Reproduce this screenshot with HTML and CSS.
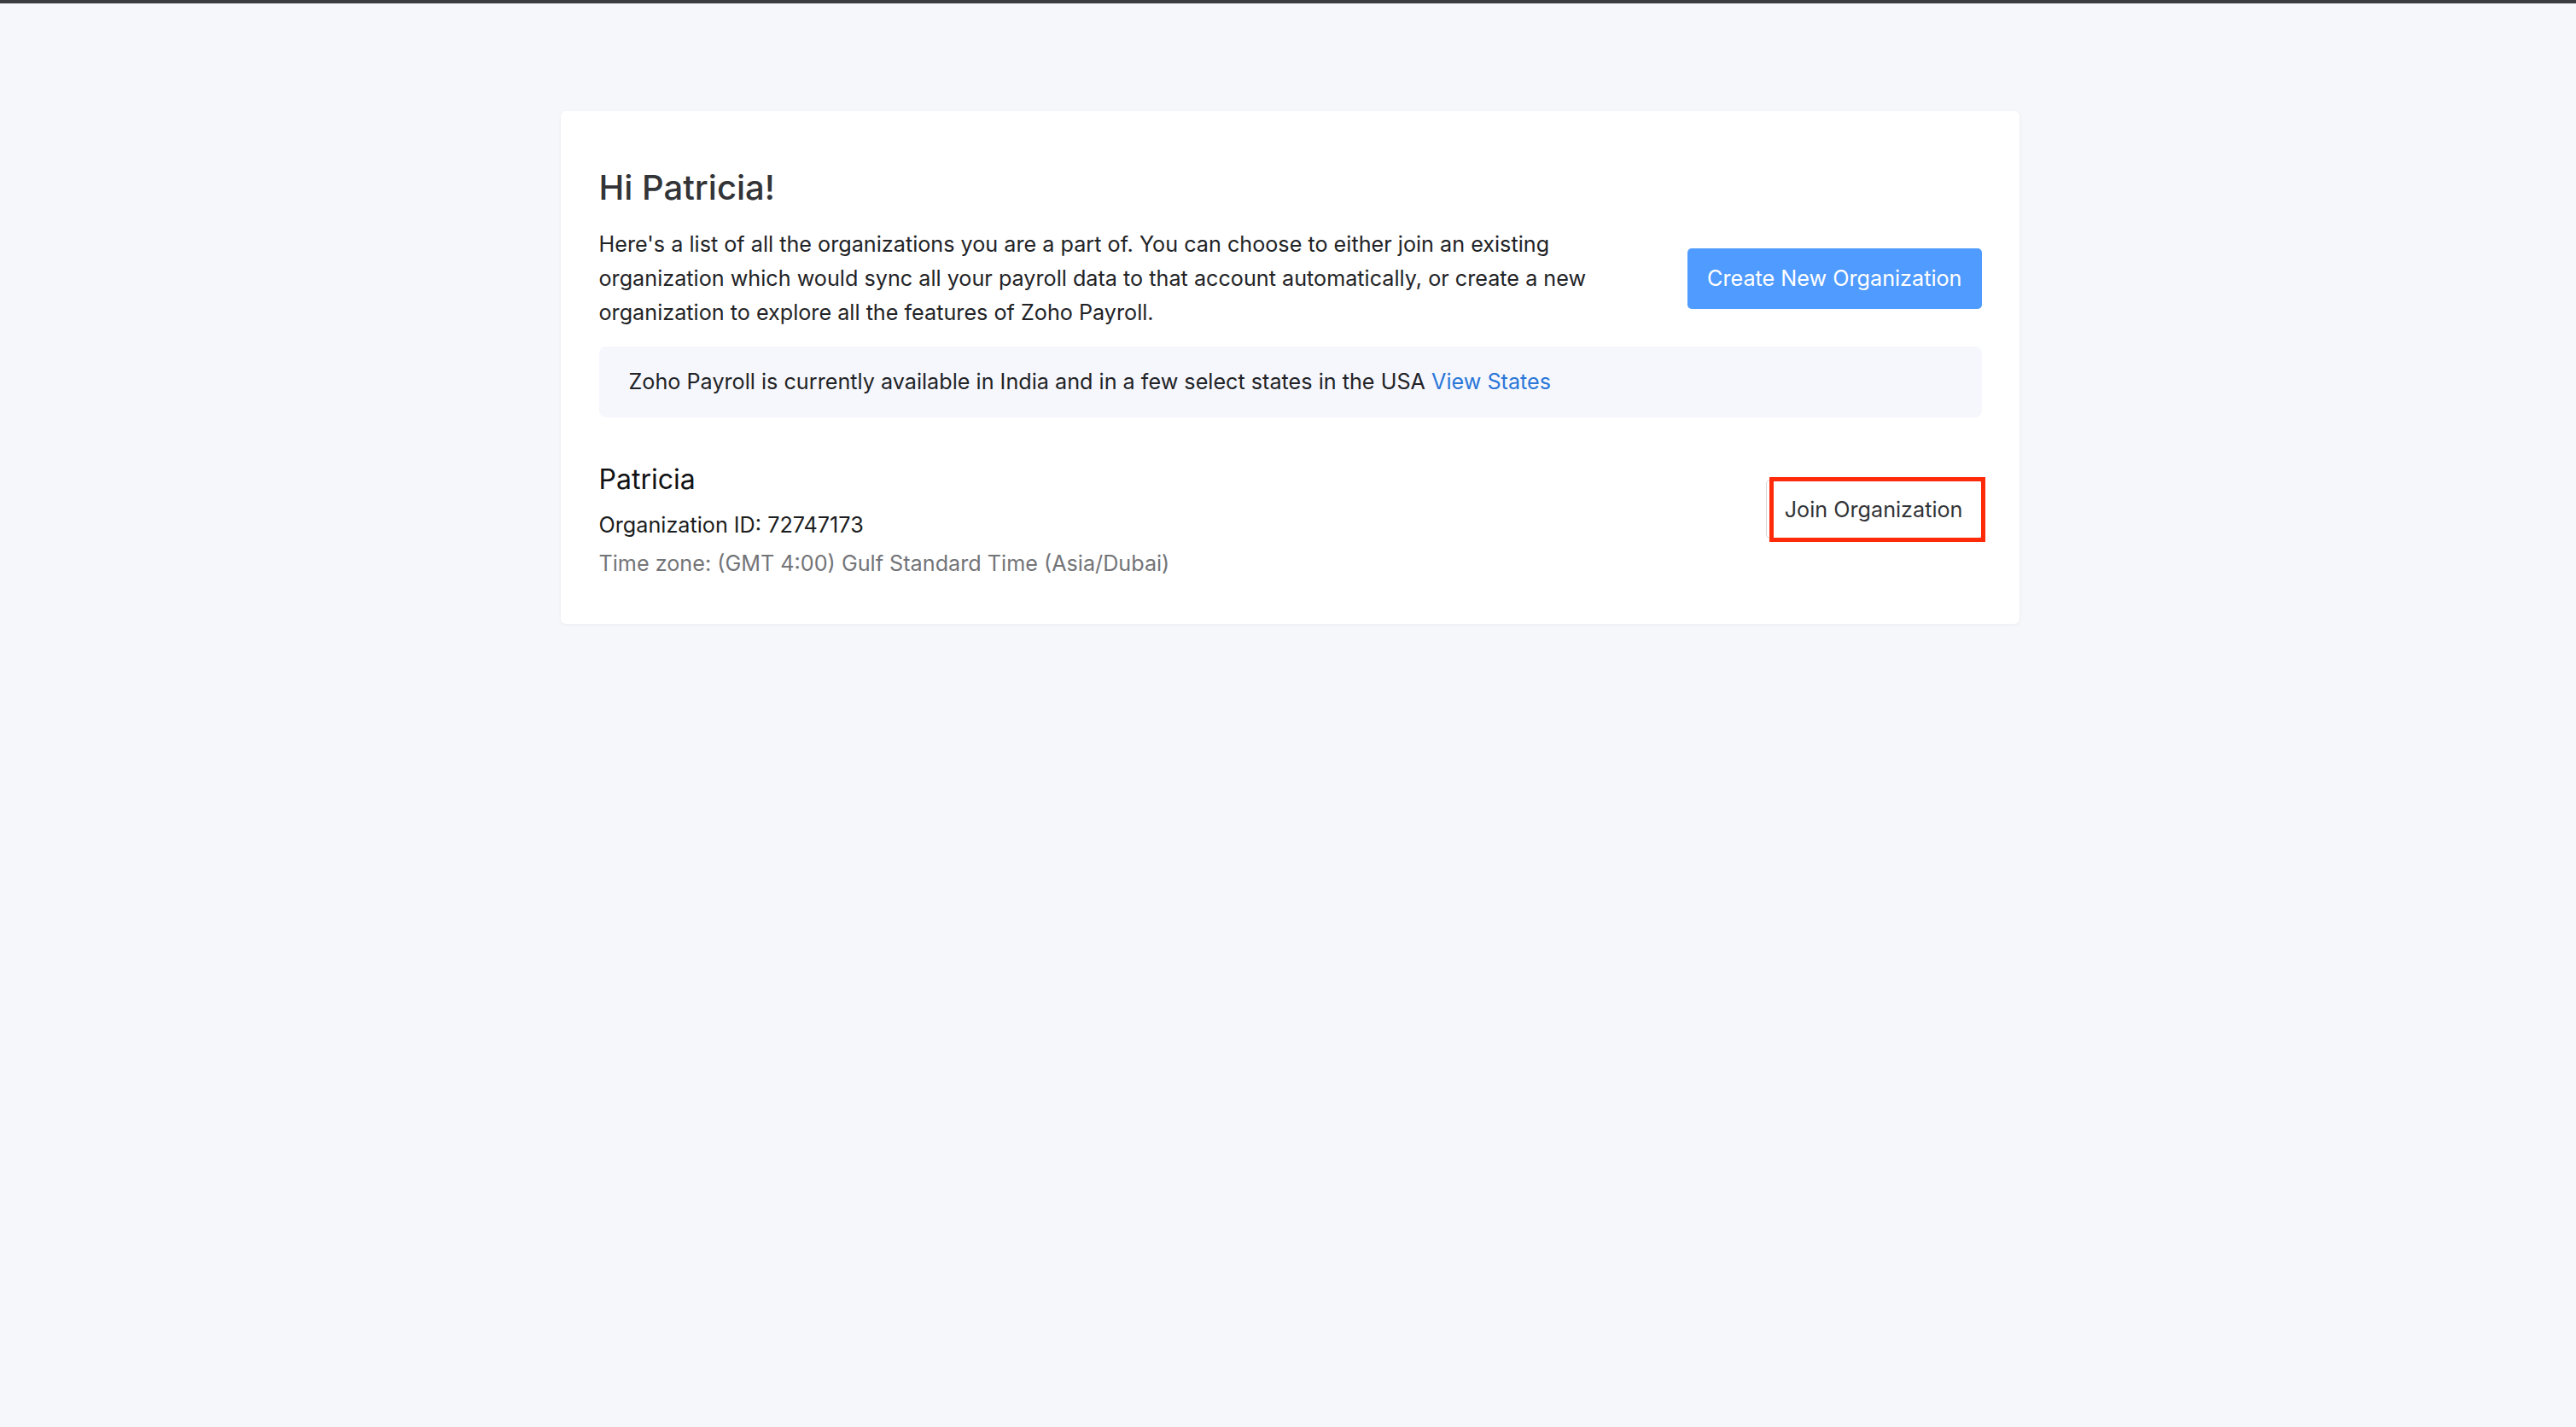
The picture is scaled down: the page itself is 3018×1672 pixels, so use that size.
FILE: index.html
```html
<!DOCTYPE html>
<html lang="en">
<head>
<meta charset="utf-8">
<title>Zoho Payroll - Organizations</title>
<link rel="stylesheet" href="styles.css">
</head>
<body>
<div class="topbar"></div>
<main class="page">
  <section class="card">
    <h1 class="greeting">Hi Patricia!</h1>
    <div class="intro">
      <p class="intro-text">Here's a list of all the organizations you are a part of. You can choose to either join an existing organization which would sync all your payroll data to that account automatically, or create a new organization to explore all the features of Zoho Payroll.</p>
      <button class="btn btn-primary">Create New Organization</button>
    </div>
    <div class="notice">Zoho Payroll is currently available in India and in a few select states in the USA <a class="link" href="#">View States</a></div>
    <div class="org">
      <div class="org-info">
        <div class="org-name">Patricia</div>
        <div class="org-id">Organization ID: 72747173</div>
        <div class="org-tz">Time zone: (GMT 4:00) Gulf Standard Time (Asia/Dubai)</div>
      </div>
      <button class="btn btn-secondary highlighted">Join Organization</button>
    </div>
  </section>
</main>
</body>
</html>
```
FILE: styles.css
```css
html, body {
  margin: 0;
  padding: 0;
}
body {
  background: #f6f7fb;
  font-family: Inter, "Noto Sans", "Liberation Sans", sans-serif;
  color: #222326;
  min-height: 1672px;
}
.topbar {
  height: 4px;
  background: #3c3d41;
}
.page {
  display: flex;
  justify-content: center;
  padding-top: 126px;
}
.card {
  width: 1709px;
  box-sizing: border-box;
  background: #ffffff;
  border-radius: 6px;
  box-shadow: 0 1px 4px rgba(30, 40, 80, 0.05);
  padding: 66px 44px 51px 45px;
  transform: translateX(2px);
}
.greeting {
  margin: 0;
  font-size: 40px;
  line-height: 48px;
  font-weight: 500;
  color: #333437;
}
.intro {
  display: flex;
  justify-content: space-between;
  align-items: center;
  margin-top: 22px;
}
.intro-text {
  margin: 0;
  width: 1230px;
  font-size: 25.2px;
  line-height: 40px;
  color: #222326;
}
.btn {
  font-family: inherit;
  font-size: 25.2px;
  line-height: 32px;
  border-radius: 5px;
  cursor: pointer;
  white-space: nowrap;
}
.btn-primary {
  background: #4f9bff;
  color: #ffffff;
  border: 0;
  height: 71px;
  padding: 0 23px;
  margin-top: 0;
}
.notice {
  margin-top: 20px;
  background: #f6f7fd;
  border-radius: 8px;
  padding: 21px 35px 22px;
  font-size: 25.2px;
  line-height: 40px;
  color: #222326;
}
.link {
  color: #2a77d8;
  text-decoration: none;
}
.org {
  display: flex;
  justify-content: space-between;
  align-items: flex-start;
  margin-top: 53px;
}
.org-name {
  font-size: 32px;
  line-height: 40px;
  color: #111214;
}
.org-id {
  margin-top: 13px;
  font-size: 25.2px;
  line-height: 40px;
  color: #1c1d20;
}
.org-tz {
  margin-top: 5px;
  font-size: 25.2px;
  line-height: 40px;
  color: #737478;
}
.btn-secondary {
  position: relative;
  background: #ffffff;
  color: #333437;
  border: 1px solid #d6d7db;
  height: 69px;
  padding: 0 21px;
  margin-top: 20px;
}
.highlighted::after {
  content: "";
  position: absolute;
  left: 3px;
  right: -5px;
  top: -4px;
  bottom: -5px;
  border: 5px solid #ff2a0a;
  pointer-events: none;
}
```
